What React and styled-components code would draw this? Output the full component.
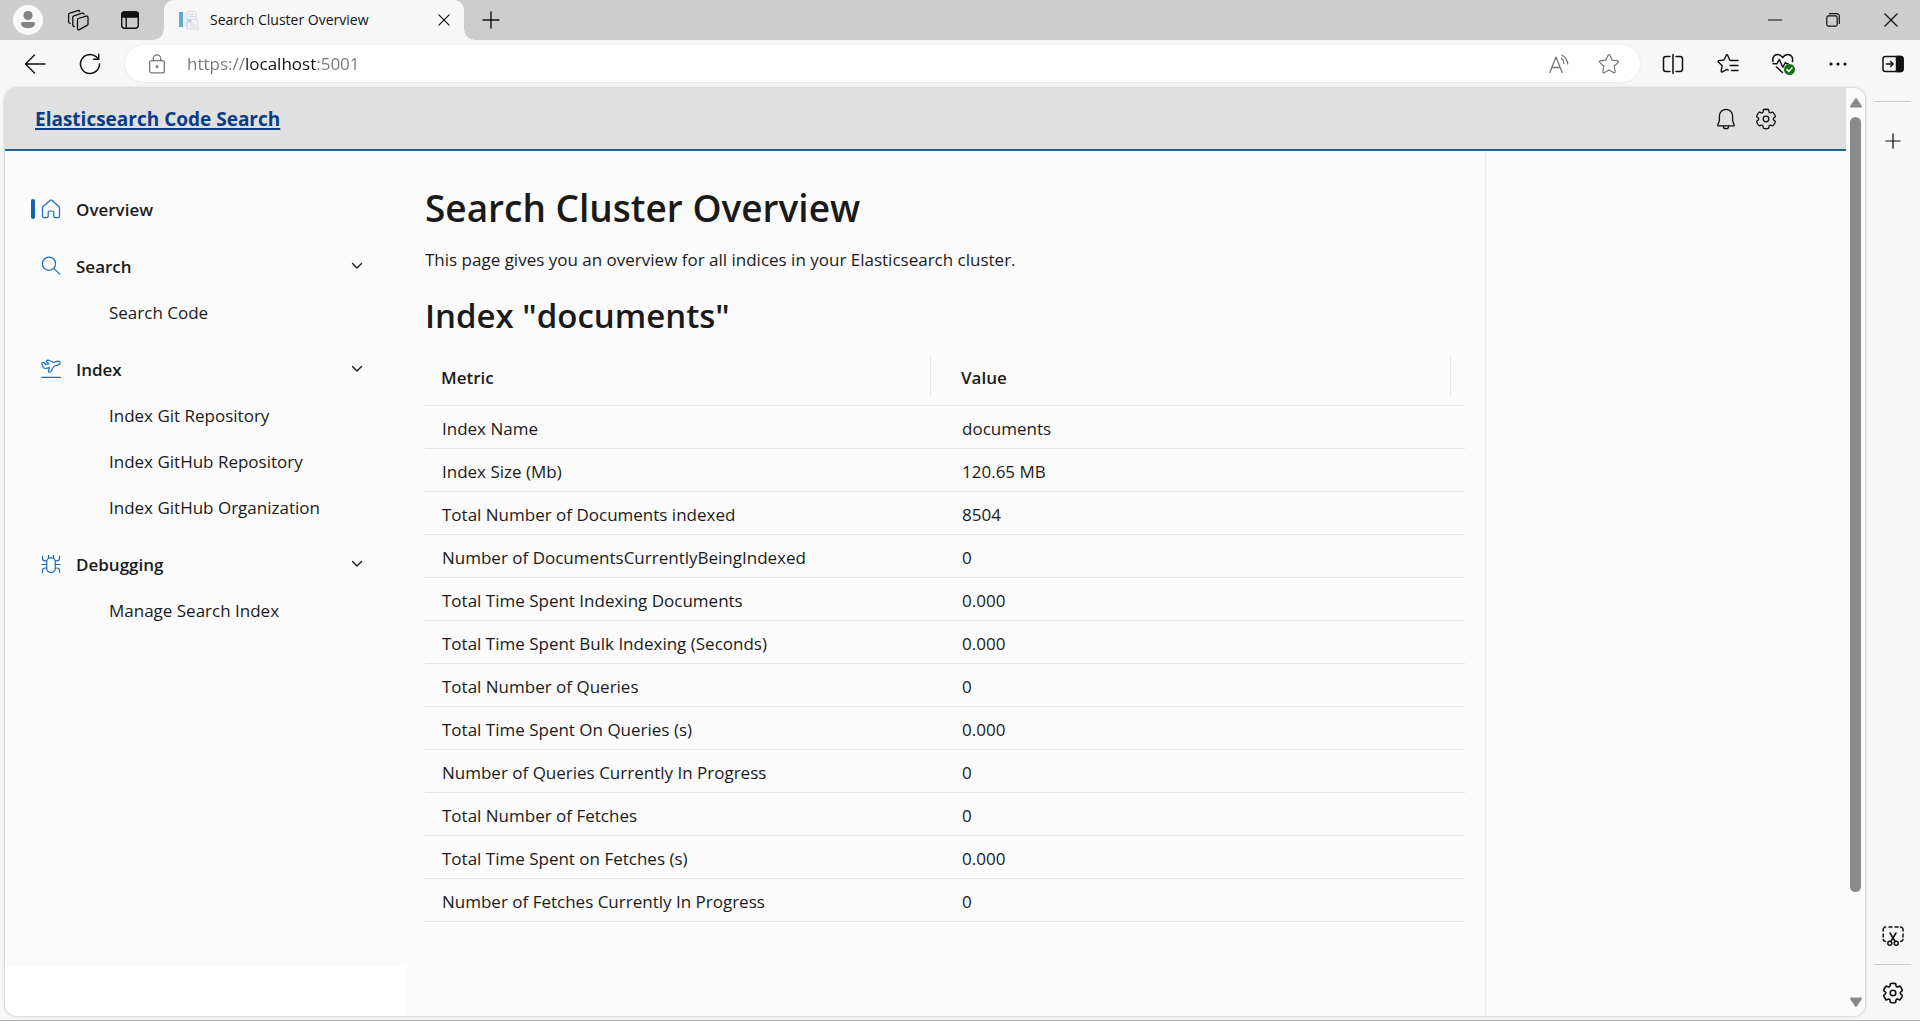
import React, { useState } from "react";
import styled, { createGlobalStyle } from "styled-components";

const GlobalStyle = createGlobalStyle`
  *, *::before, *::after { box-sizing: border-box; }
  body {
    margin: 0;
    background: #f7f7f7;
    color: #1a1a1a;
    font-family: "Open Sans", "Noto Sans", sans-serif;
    font-size: 17px;
  }
  button { font: inherit; color: inherit; }
`;

/* ---------- icons ---------- */

const Svg = styled.svg`
  display: block;
  flex: none;
  width: ${(p) => p.$size || 20}px;
  height: ${(p) => p.$size || 20}px;
  fill: none;
  stroke: currentColor;
  stroke-width: ${(p) => p.$weight || 1.2};
  stroke-linecap: round;
  stroke-linejoin: round;
`;

const Icon = ({ size, weight, box = 20, children }) => (
  <Svg $size={size} $weight={weight} viewBox={`0 0 ${box} ${box}`} aria-hidden="true">
    {children}
  </Svg>
);

const GEAR =
  "M12.01 2.25c.73.01 1.47.09 2.18.25.31.07.55.33.59.65l.17 1.53c.08.7.67 1.23 1.37 1.23.19 0 .38-.04.55-.12l1.4-.61c.29-.13.63-.06.85.17 1.01 1.08 1.77 2.38 2.21 3.79.09.31-.01.64-.27.83l-1.25.92c-.35.26-.56.67-.56 1.11s.21.85.56 1.11l1.25.92c.25.19.36.52.27.83-.44 1.41-1.2 2.71-2.21 3.79-.22.23-.56.3-.85.17l-1.4-.62c-.4-.17-.87-.15-1.25.07s-.63.61-.68 1.05l-.17 1.52c-.03.32-.26.58-.57.65-1.45.35-2.96.35-4.4 0-.31-.07-.54-.33-.57-.65l-.17-1.52c-.05-.44-.3-.82-.68-1.04s-.84-.25-1.25-.07l-1.4.61c-.29.13-.63.06-.85-.17-1.01-1.08-1.77-2.38-2.2-3.8-.1-.3.01-.63.27-.82l1.24-.92c.35-.26.56-.67.56-1.11s-.21-.85-.56-1.11l-1.25-.92c-.25-.19-.36-.52-.27-.82.44-1.42 1.2-2.71 2.21-3.8.22-.23.56-.3.85-.17l1.4.62c.4.18.87.15 1.25-.07s.63-.61.68-1.05l.17-1.53c.04-.32.27-.58.58-.65.72-.16 1.45-.24 2.2-.25Z";

const Gear = ({ weight = 1.3 }) => (
  <Icon size={24} box={24} weight={weight}>
    <path d={GEAR} />
    <circle cx="12" cy="12" r="2.8" />
  </Icon>
);
const Bell = () => (
  <Icon size={22} weight={1.2}>
    <path d="M10 1.200a6 6 0 0 0-6 6v4.500l-1.500 3.700c-.2.500.1.900.6.900h13.800c.5 0 .8-.4.600-.900L16 11.700V7.200a6 6 0 0 0-6-6Z" />
    <path d="M7.700 16.500a2.300 2.300 0 0 0 4.600 0" />
  </Icon>
);
const Close = ({ size = 14 }) => (
  <Icon size={size} box={14} weight={1.3}><path d="M1 1l12 12M13 1L1 13" /></Icon>
);
const Plus = ({ size = 18 }) => (
  <Icon size={size} box={18} weight={1.400}><path d="M9 1v16M1 9h16" /></Icon>
);
const Minimize = () => <Icon size={14} box={14}><path d="M.5 7h13" /></Icon>;
const Restore = () => (
  <Icon size={14} box={14}>
    <rect x=".8" y="2.800" width="10.400" height="10.400" rx="1.800" />
    <path d="M3.500.7h7.300a2.500 2.500 0 0 1 2.500 2.500v7.300" />
  </Icon>
);
const Person = () => (
  <Svg $size={30} viewBox="0 0 30 30" aria-hidden="true" stroke="none">
    <circle cx="15" cy="15" r="15" fill="#f9f9f9" stroke="none" />
    <circle cx="15" cy="10.500" r="4.600" fill="#838383" stroke="none" />
    <path d="M9.500 17h11a1.500 1.500 0 0 1 1.500 1.500c0 3-3.200 4.700-7 4.700s-7-1.700-7-4.700A1.500 1.500 0 0 1 9.500 17Z" fill="#838383" stroke="none" />
  </Svg>
);
const Workspaces = () => (
  <Icon size={22} box={22} weight={1.300}>
    <path d="M11.200 9.500l8-2.400c1-.3 1.800.3 1.800 1.300v6.500c0 .7-.3 1.200-1 1.500l-7.600 4.200c-1 .5-1.900 0-1.900-1.100v-8.400c0-.8.1-1.400.7-1.600Z" />
    <path d="M7.300 17.500c-.8 0-1.500-.5-1.500-1.400V8.300c0-.7.500-1.300 1.200-1.500l8.200-2.600c.9-.3 1.600.2 1.900 1" />
    <path d="M3.200 14.300c-.9 0-1.600-.6-1.600-1.500V5.600c0-.7.500-1.300 1.200-1.500l8-2.500c.9-.3 1.600.1 1.900.9" />
  </Icon>
);
const TabMenu = () => (
  <Icon size={20} weight={1.400}>
    <rect x="1.700" y="1.900" width="16.600" height="16.300" rx="3" />
    <path d="M1.700 7V4.500a2.600 2.600 0 0 1 2.600-2.600h11.400a2.600 2.600 0 0 1 2.600 2.600V7Z" fill="currentColor" />
    <path d="M6.200 7v11" />
  </Icon>
);
const Favicon = () => (
  <Svg $size={20} viewBox="0 0 20 20" aria-hidden="true">
    <rect x="0" y="2" width="4" height="15" fill="#69a9c9" stroke="none" />
    <path d="M5 3h3v14H5Z" fill="#e6eef5" stroke="none" />
    <path d="M9 1.200h6l2.500 2.500V18H9Z" fill="#f1f3f6" stroke="#d0d6dc" strokeWidth=".7" />
    <path d="M8.500 9.500h8l2.500 2.500v7H8.500Z" fill="#f6f7f9" stroke="#c4cad1" strokeWidth=".7" />
    <path d="M11 4.500h3M11 6.700h5M11 13h4M11 15h6M11 17h6" stroke="#c2c9d1" strokeWidth=".7" />
    <path d="M8.500 9.500h4v3h-4Z" fill="#b9cede" stroke="none" />
  </Svg>
);
const Back = () => (
  <Icon size={22} box={22} weight={1.400}><path d="M21 11H1.500M10.500 2L1.500 11l9 9" /></Icon>
);
const Reload = () => (
  <Icon size={22} box={22} weight={1.500}>
    <path d="M20.500 11a9.500 9.500 0 1 1-3.300-7.200L19.600 6" /><path d="M19.700 1.200V6.200H14.700" />
  </Icon>
);
const Lock = () => (
  <Icon size={20} weight={1.300}>
    <rect x="2.700" y="6.700" width="14.600" height="12.200" rx="2" />
    <path d="M6.300 6.700V4.500a3.700 3.700 0 0 1 7.400 0v2.200" />
    <circle cx="10" cy="12.800" r=".8" fill="currentColor" />
  </Icon>
);
const ReadAloud = () => (
  <Icon size={20} weight={1.300}>
    <path d="M.8 18.500L7 3l6.200 15.500M2.800 13.500h8.400" />
    <path d="M12.500 4.500a7 7 0 0 1 2.500 5M12.700 1a10.500 10.500 0 0 1 6 9" />
  </Icon>
);
const Star = () => (
  <Icon size={22} weight={1.100}>
    <path d="M9.300 1.800a.8.8 0 0 1 1.400 0l2.200 4.600 5.100.7c.7.100.9.900.4 1.400l-3.700 3.500.9 5c.1.700-.6 1.200-1.200.9L10 15.500l-4.500 2.400c-.6.300-1.200-.2-1.100-.9l.9-5L1.600 8.500c-.5-.5-.3-1.300.4-1.400l5.100-.7Z" />
  </Icon>
);
const Split = () => (
  <Icon size={22} box={22} weight={1.500}>
    <path d="M8 3.500H4a2.500 2.500 0 0 0-2.500 2.500v10A2.500 2.500 0 0 0 4 18.500h4M14 3.500h4A2.500 2.500 0 0 1 20.500 6v10a2.500 2.500 0 0 1-2.500 2.500h-4M11 1.500v19" />
  </Icon>
);
const Favorites = () => (
  <Icon size={22} box={22} weight={1.400}>
    <path d="M14 7.500l-1.200-.2L10.600 2.200a.8.8 0 0 0-1.400 0L7 7 1.900 7.600c-.7.100-1 .9-.5 1.400l3.800 3.700-1 5.300c-.1.700.6 1.200 1.200.9l4.500-2.500 1.300.7M14.500 7.500H21M13 12.500h8M14.500 17.500H21" />
  </Icon>
);
const Health = () => (
  <Icon size={24} box={24} weight={1.500}>
    <path d="M2 9.500C1 5.500 3.200 2.500 6.500 2.500c2.300 0 4 1.300 5.200 3.200 1.200-1.900 2.900-3.200 5.200-3.200 3.200 0 5.500 3 4.500 7M5.500 15l6 5.500" />
    <path d="M2 11.700h4l2.300-4.200 3.500 7.800 2.600-4.800 1.200 1.200h1.500" />
    <circle cx="18.500" cy="17.500" r="5.500" fill="#15701a" stroke="none" />
    <path d="M16 17.600l1.800 1.800 3.200-3.500" stroke="#fff" />
  </Icon>
);
const Dots = () => (
  <Icon size={18} box={18}>
    {[2, 9, 16].map((x) => <circle key={x} cx={x} cy="9" r="1.600" fill="currentColor" stroke="none" />)}
  </Icon>
);
const SidePane = () => (
  <Icon size={22} box={22} weight={1.500}>
    <rect x="1" y="3.500" width="20" height="15" rx="2.500" />
    <path d="M14.500 3.500h4A2.500 2.500 0 0 1 21 6v10a2.500 2.500 0 0 1-2.500 2.500h-4Z" fill="currentColor" />
    <path d="M4.500 11h6.500M8.700 8.500L11.200 11l-2.500 2.500" />
  </Icon>
);
const Snip = () => (
  <Icon size={22} box={22} weight={1.500}>
    <path d="M1.200 6V4.500a2.500 2.500 0 0 1 2.500-2.500M7 2h3M13 2h3M18.500 2a2.500 2.500 0 0 1 2.500 2.500V6M1.200 9v3M21 9v3M1.200 14.500c.3 1.200 1 1.800 2.300 1.900M21 14.500c-.3 1.200-1 1.800-2.300 1.900" />
    <path d="M8 8l5.200 8.500M14 8l-5.200 8.500" />
    <circle cx="7.800" cy="18.200" r="2" /><circle cx="14.200" cy="18.200" r="2" />
  </Icon>
);
const Home = () => (
  <Icon><path d="M9.200 1.300a1.200 1.200 0 0 1 1.600 0l7 6.200c.4.400.7.900.7 1.400v8.300c0 .8-.6 1.400-1.400 1.400h-3c-.8 0-1.300-.6-1.300-1.400v-3.900c0-.8-.5-1.300-1.200-1.300H8.400c-.7 0-1.200.5-1.200 1.300v3.900c0 .8-.5 1.400-1.300 1.400h-3c-.8 0-1.400-.6-1.400-1.400V8.900c0-.5.300-1 .7-1.400Z" /></Icon>
);
const Search = () => (
  <Icon><circle cx="8" cy="7.700" r="6.600" /><path d="M12.900 12.400l5.800 5.700" /></Icon>
);
const Takeoff = () => (
  <Icon>
    <path d="M.6 18.300h19" />
    <path d="M.8 4.900c-.3-.6.100-1.100.7-1.200l.8-.2c.4-.1.800.1 1 .4l1.400 1.700 3.200-.9-2.300-2c-.5-.5-.3-1.200.3-1.400l.8-.2c.4-.1.700 0 1 .2l4.700 2 3.600-1c1.400-.4 2.800.1 3.100 1.100.3 1.100-.7 2.100-1.900 2.500l-4.200 1.300-3.100 5.200c-.2.400-.5.500-.8.600l-.8.200c-.5.100-.9-.3-.8-.8l.9-3.900-3.400.9c-1.400.3-2.500-.2-3-1.300Z" />
  </Icon>
);
const Bug = () => (
  <Icon>
    <rect x="5.700" y="3.800" width="8.600" height="14.600" rx="3.800" />
    <path d="M7.500 3.800V1.300M12.500 3.800V1.300M1.500 2v2.200c0 1.500 1.200 2.600 2.700 2.600h1.500M18.500 2v2.200c0 1.500-1.200 2.600-2.700 2.600h-1.500M.8 10.500h4.900M14.300 10.500h4.900M1.500 18.500v-2c0-1.500 1.200-2.500 2.700-2.500h1.500M18.500 18.500v-2c0-1.500-1.200-2.500-2.700-2.500h-1.500" />
  </Icon>
);
const Chevron = () => (
  <Icon size={12} box={12} weight={1.400}><path d="M1.500 3.500L6 8l4.500-4.500" /></Icon>
);
const Triangle = ({ down }) => (
  <Svg $size={14} viewBox="0 0 14 14" aria-hidden="true">
    <path d={down ? "M2 3.500h10L7 11Z" : "M2 10.500h10L7 3Z"} fill="#8a8a8a" stroke="#8a8a8a" strokeWidth="2" />
  </Svg>
);

/* ---------- browser frame ---------- */

const Browser = styled.div`
  display: flex;
  flex-direction: column;
  height: 100vh;
  border-bottom: 1px solid #a9b4c1;
`;

const TabStrip = styled.header`
  display: flex;
  height: 40px;
  background: #cdcdcd;
  color: #111;
`;

const IconButton = styled.button`
  display: flex;
  align-items: center;
  justify-content: center;
  width: ${(p) => p.$w || 55}px;
  flex: none;
  padding: 0;
  border: 0;
  background: none;
  color: ${(p) => p.$color || "#111"};
`;

const StripTools = styled.div`
  display: flex;
  padding: 0 8px 0 3px;
`;

const Tab = styled.div`
  position: relative;
  display: flex;
  align-items: center;
  width: 300px;
  padding-left: 15px;
  border-radius: 10px 10px 0 0;
  background: #f7f7f7;
  &::before, &::after {
    content: "";
    position: absolute;
    bottom: 0;
    width: 10px;
    height: 10px;
  }
  &::before {
    right: 100%;
    background: radial-gradient(circle at 0 0, transparent 9px, #f7f7f7 10px);
  }
  &::after {
    left: 100%;
    background: radial-gradient(circle at 100% 0, transparent 9px, #f7f7f7 10px);
  }
`;

const TabTitle = styled.span`
  flex: 1;
  padding-left: 11px;
  font-size: 14px;
  line-height: 20px;
  white-space: nowrap;
`;

const WindowControls = styled.div`
  display: flex;
  margin-left: auto;
`;

const Toolbar = styled.div`
  display: flex;
  height: 48px;
  padding-left: 7px;
`;

const AddressBar = styled.label`
  display: flex;
  flex: 1;
  align-items: center;
  height: 37px;
  margin: 5px 5px 0 8px;
  padding: 0 6px 0 22px;
  border-radius: 19px;
  background: #fff;
  box-shadow: 0 0 3px rgba(0, 0, 0, 0.1);
  color: #767676;
`;

/* The host name is darker than the scheme and the port. */
const UrlInput = styled.input`
  flex: 1;
  min-width: 0;
  margin-left: 20px;
  padding: 0;
  border: 0;
  outline: 0;
  color: #777;
  font: 17px/24px "Open Sans", "Noto Sans", sans-serif;
  background: linear-gradient(90deg, #777 58px, #111 58px, #111 129px, #777 129px);
  background-clip: text;
  -webkit-background-clip: text;
  -webkit-text-fill-color: transparent;
`;

const Body = styled.div`
  display: flex;
  flex: 1;
  min-height: 0;
  padding: 0 0 4px 5px;
`;

const Viewport = styled.div`
  display: flex;
  flex: 1;
  min-width: 0;
  overflow: hidden;
  border-radius: 12px;
  background: #fbfbfb;
  box-shadow: 0 0 3px rgba(0, 0, 0, 0.3);
`;

const ScrollBar = styled.div`
  display: flex;
  flex-direction: column;
  align-items: center;
  width: 19px;
  padding: 8px 0 7px;
  background: #fbfbfb;
`;

const Track = styled.div`
  display: flex;
  flex: 1;
  flex-direction: column;
  margin: 7px 0 0;
  &::after { content: ""; flex: 2; }
`;

const Thumb = styled.div`
  flex: 15;
  width: 11px;
  border-radius: 6px;
  background: #8a8a8a;
`;

const Rail = styled.aside`
  display: flex;
  flex-direction: column;
  align-items: center;
  width: 55px;
  padding: 13px 0 7px;
  color: #111;
`;

const RailLine = styled.hr`
  width: 36px;
  margin: ${(p) => p.$margin || "0"};
  border: 0;
  border-top: 1px solid #c9c9c9;
`;

const RailButton = styled(IconButton)`
  height: 32px;
`;

const Spacer = styled.div`
  flex: 1;
`;

/* ---------- page ---------- */

const Page = styled.div`
  display: flex;
  flex: 1;
  flex-direction: column;
  min-width: 0;
`;

const PageHeader = styled.header`
  display: flex;
  align-items: center;
  height: 63px;
  padding: 0 60px 0 30px;
  border-bottom: 2px solid #1f6298;
  background: #e0e0e0;
`;

const Brand = styled.a`
  margin-right: auto;
  color: #0c3c85;
  font-size: 19px;
  font-weight: 700;
  text-decoration-thickness: 2px;
  text-underline-offset: 2px;
`;

const Columns = styled.div`
  display: flex;
  flex: 1;
  min-height: 0;
`;

const NavColumn = styled.div`
  width: 400px;
  flex: none;
  padding-bottom: 50px;
  background: #fff;
`;

const Nav = styled.nav`
  height: 100%;
  padding: 35px 42px 0 26px;
  background: #fbfbfb;
`;

const itemBase = `
  display: flex;
  align-items: center;
  width: 100%;
  height: 46px;
  padding: 0;
  border: 0;
  background: none;
  color: #1a1a1a;
  text-decoration: none;
  text-align: left;
`;

const NavLink = styled.a`
  ${itemBase}
  font-weight: 600;
`;

const GroupButton = styled.button`
  ${itemBase}
  margin-top: 11px;
  font-weight: 600;
`;

const Marker = styled.span`
  width: 4px;
  height: 20px;
  margin-right: 6px;
  border-radius: 2px;
  background: ${(p) => (p.$active ? "#0f62b4" : "transparent")};
`;

const NavIcon = styled.span`
  margin-right: 15px;
  color: #1a6dc0;
`;

const GroupLabel = styled.span`
  flex: 1;
`;

const SubList = styled.ul`
  margin: 0;
  padding: 0;
  list-style: none;
`;

const SubLink = styled.a`
  ${itemBase}
  padding-left: 78px;
`;

const Main = styled.main`
  flex: 1;
  min-width: 0;
  margin-right: 360px;
  padding: 30px 20px 0;
  border-right: 1px solid #ebebeb;
`;

const Title = styled.h1`
  margin: 0;
  font-size: 37px;
  font-weight: 600;
  line-height: 54px;
`;

const Intro = styled.p`
  margin: 12px 0;
  line-height: 26px;
`;

const Subtitle = styled.h2`
  margin: 0;
  padding-top: 6px;
  font-size: 33px;
  font-weight: 600;
  line-height: 50px;
`;

const Table = styled.table`
  width: 100%;
  margin-top: 15px;
  table-layout: fixed;
  border-collapse: collapse;
`;

const Row = styled.tr`
  border-bottom: 1px solid #e6e6e6;
`;

const HeadCell = styled.th`
  height: 49px;
  padding: 0 14px 8px 0;
  font-weight: 600;
  text-align: left;
`;

const HeadLabel = styled.div`
  height: 40px;
  padding: 9px 16px 0;
  border-right: 1px solid #e6e6e6;
  line-height: 26px;
`;

const Cell = styled.td`
  height: 43px;
  padding: 4px 17px 0;
`;

const GROUPS = [
  { label: "Search", icon: Search, links: ["Search Code"] },
  { label: "Index", icon: Takeoff, links: ["Index Git Repository", "Index GitHub Repository", "Index GitHub Organization"] },
  { label: "Debugging", icon: Bug, links: ["Manage Search Index"] },
];

const METRICS = [
  ["Index Name", "documents"],
  ["Index Size (Mb)", "120.65 MB"],
  ["Total Number of Documents indexed", "8504"],
  ["Number of DocumentsCurrentlyBeingIndexed", "0"],
  ["Total Time Spent Indexing Documents", "0.000"],
  ["Total Time Spent Bulk Indexing (Seconds)", "0.000"],
  ["Total Number of Queries", "0"],
  ["Total Time Spent On Queries (s)", "0.000"],
  ["Number of Queries Currently In Progress", "0"],
  ["Total Number of Fetches", "0"],
  ["Total Time Spent on Fetches (s)", "0.000"],
  ["Number of Fetches Currently In Progress", "0"],
];

function NavGroup({ label, icon: GroupIcon, links }) {
  const [open, setOpen] = useState(true);
  return (
    <div>
      <GroupButton type="button" aria-expanded={open} onClick={() => setOpen(!open)}>
        <Marker />
        <NavIcon><GroupIcon /></NavIcon>
        <GroupLabel>{label}</GroupLabel>
        <Chevron />
      </GroupButton>
      {open && (
        <SubList>
          {links.map((l) => <li key={l}><SubLink href="#">{l}</SubLink></li>)}
        </SubList>
      )}
    </div>
  );
}

export default function App() {
  const [url, setUrl] = useState("https://localhost:5001");
  return (
    <>
      <GlobalStyle />
      <Browser>
        <TabStrip>
          <StripTools>
            <IconButton $w={50} aria-label="Profile"><Person /></IconButton>
            <IconButton $w={50} aria-label="Workspaces"><Workspaces /></IconButton>
            <IconButton $w={53} aria-label="Tab actions"><TabMenu /></IconButton>
          </StripTools>
          <Tab>
            <Favicon />
            <TabTitle>Search Cluster Overview</TabTitle>
            <IconButton $w={40} aria-label="Close tab"><Close size={12} /></IconButton>
          </Tab>
          <IconButton $w={54} aria-label="New tab"><Plus /></IconButton>
          <WindowControls>
            <IconButton $w={58} aria-label="Minimize"><Minimize /></IconButton>
            <IconButton $w={58} aria-label="Restore"><Restore /></IconButton>
            <IconButton $w={58} aria-label="Close"><Close /></IconButton>
          </WindowControls>
        </TabStrip>

        <Toolbar>
          <IconButton aria-label="Back"><Back /></IconButton>
          <IconButton aria-label="Reload"><Reload /></IconButton>
          <AddressBar>
            <Lock />
            <UrlInput aria-label="Address" value={url} spellCheck={false} onChange={(e) => setUrl(e.target.value)} />
            <IconButton $w={50} $color="#767676" aria-label="Read aloud"><ReadAloud /></IconButton>
            <IconButton $w={50} $color="#767676" aria-label="Add to favorites"><Star /></IconButton>
          </AddressBar>
          <IconButton aria-label="Split screen"><Split /></IconButton>
          <IconButton aria-label="Favorites"><Favorites /></IconButton>
          <IconButton aria-label="Browser essentials"><Health /></IconButton>
          <IconButton aria-label="More"><Dots /></IconButton>
          <IconButton aria-label="Sidebar"><SidePane /></IconButton>
        </Toolbar>

        <Body>
          <Viewport>
            <Page>
              <PageHeader>
                <Brand href="#">Elasticsearch Code Search</Brand>
                <IconButton $w={40} aria-label="Notifications"><Bell /></IconButton>
                <IconButton $w={40} aria-label="Settings"><Gear /></IconButton>
              </PageHeader>
              <Columns>
                <NavColumn>
                  <Nav>
                    <NavLink href="#">
                      <Marker $active />
                      <NavIcon><Home /></NavIcon>
                      Overview
                    </NavLink>
                    {GROUPS.map((g) => <NavGroup key={g.label} {...g} />)}
                  </Nav>
                </NavColumn>
                <Main>
                  <Title>Search Cluster Overview</Title>
                  <Intro>This page gives you an overview for all indices in your Elasticsearch cluster.</Intro>
                  <Subtitle>Index "documents"</Subtitle>
                  <Table>
                    <thead>
                      <Row>
                        <HeadCell scope="col"><HeadLabel>Metric</HeadLabel></HeadCell>
                        <HeadCell scope="col"><HeadLabel>Value</HeadLabel></HeadCell>
                      </Row>
                    </thead>
                    <tbody>
                      {METRICS.map(([name, value]) => (
                        <Row key={name}><Cell>{name}</Cell><Cell>{value}</Cell></Row>
                      ))}
                    </tbody>
                  </Table>
                </Main>
              </Columns>
            </Page>
            <ScrollBar>
              <Triangle />
              <Track><Thumb /></Track>
              <Triangle down />
            </ScrollBar>
          </Viewport>
          <Rail>
            <RailLine $margin="0 0 23px" />
            <RailButton aria-label="Add to sidebar"><Plus size={16} /></RailButton>
            <Spacer />
            <RailButton aria-label="Screenshot"><Snip /></RailButton>
            <RailLine $margin="12px 0" />
            <RailButton aria-label="Sidebar settings"><Gear weight={1.600} /></RailButton>
          </Rail>
        </Body>
      </Browser>
    </>
  );
}
